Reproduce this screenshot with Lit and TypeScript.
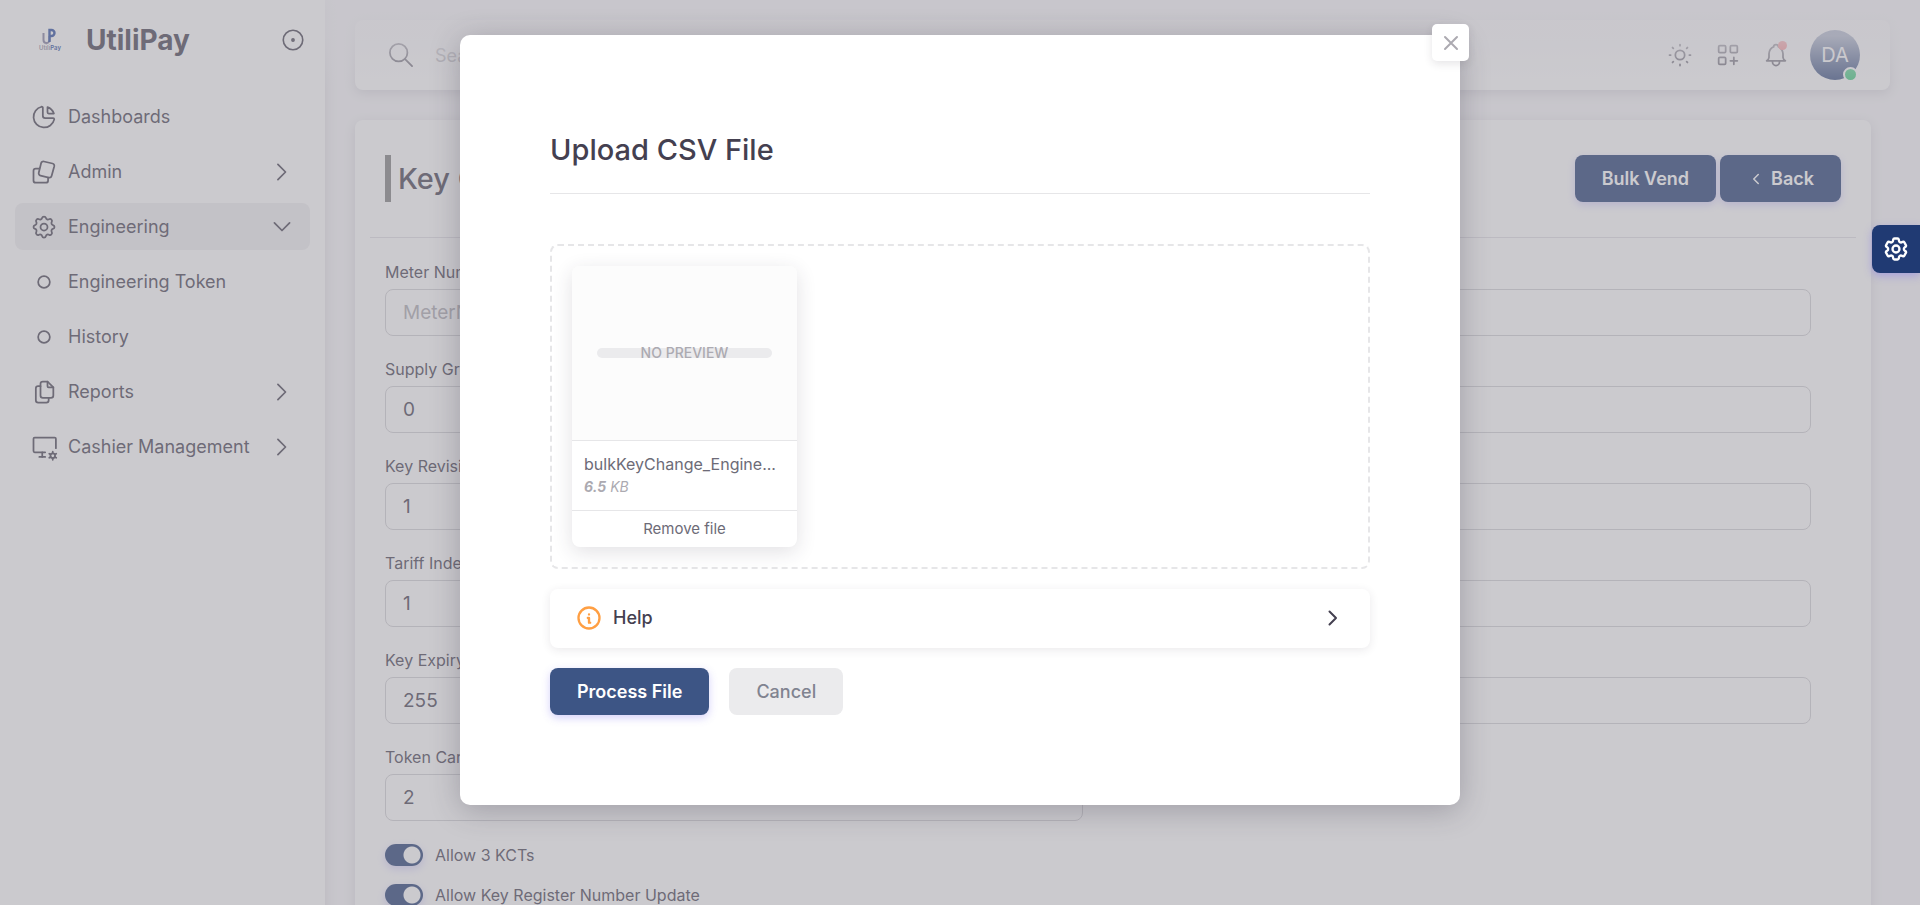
import { LitElement, html, css, svg, nothing } from "lit";
import { customElement, property } from "lit/decorators.js";

const ICONS: Record<string, unknown> = {
  pie: svg`<path d="M10 3.2a9 9 0 1 0 10.8 10.8a1 1 0 0 0 -1 -1h-6.8a2 2 0 0 1 -2 -2v-7a.9 .9 0 0 0 -1 -.8"/><path d="M15 3.5a9 9 0 0 1 5.5 5.5h-4.5a1 1 0 0 1 -1 -1v-4.5"/>`,
  cards: svg`<path d="M11.9 3l7.4 1.700a2 2 0 0 1 1.5 2.4l-2.3 8.3a2 2 0 0 1 -2.4 1.4l-7.1 -1.700a2 2 0 0 1 -1.5 -2.4l2 -8.2a2 2 0 0 1 2.4 -1.5z"/><path d="M8 9h-3a2 2 0 0 0 -2 2v8.2a2 2 0 0 0 2 2h8.5a2 2 0 0 0 2 -2v-2.3"/>`,
  settings: svg`<path d="M10.325 4.317c.426 -1.756 2.924 -1.756 3.35 0a1.724 1.724 0 0 0 2.573 1.066c1.543 -.94 3.31 .826 2.37 2.37a1.724 1.724 0 0 0 1.065 2.572c1.756 .426 1.756 2.924 0 3.35a1.724 1.724 0 0 0 -1.066 2.573c.94 1.543 -.826 3.31 -2.37 2.37a1.724 1.724 0 0 0 -2.572 1.065c-.426 1.756 -2.924 1.756 -3.35 0a1.724 1.724 0 0 0 -2.573 -1.066c-1.543 .94 -3.31 -.826 -2.37 -2.37a1.724 1.724 0 0 0 -1.065 -2.572c-1.756 -.426 -1.756 -2.924 0 -3.35a1.724 1.724 0 0 0 1.066 -2.573c-.94 -1.543 .826 -3.31 2.37 -2.37c1 .608 2.296 .07 2.572 -1.065z"/><circle cx="12" cy="12" r="3"/>`,
  cog: svg`<path d="M9.594 3.94c.09-.542.56-.94 1.11-.94h2.593c.55 0 1.02.398 1.11.94l.213 1.281c.063.374.313.686.645.87.074.04.147.083.22.127.325.196.72.257 1.075.124l1.217-.456a1.125 1.125 0 0 1 1.37.49l1.296 2.247a1.125 1.125 0 0 1-.26 1.431l-1.003.827c-.293.241-.438.613-.43.992a7.723 7.723 0 0 1 0 .255c-.008.378.137.75.43.991l1.004.827c.424.35.534.955.26 1.43l-1.298 2.247a1.125 1.125 0 0 1-1.369.491l-1.217-.456c-.355-.133-.75-.072-1.076.124a6.47 6.47 0 0 1-.22.128c-.331.183-.581.495-.644.869l-.213 1.281c-.09.543-.56.94-1.11.94h-2.594c-.55 0-1.019-.398-1.11-.94l-.213-1.281c-.062-.374-.312-.686-.644-.87a6.52 6.52 0 0 1-.22-.127c-.325-.196-.72-.257-1.076-.124l-1.217.456a1.125 1.125 0 0 1-1.369-.49l-1.297-2.247a1.125 1.125 0 0 1 .26-1.431l1.004-.827c.292-.24.437-.613.43-.991a6.932 6.932 0 0 1 0-.255c.007-.38-.138-.751-.43-.992l-1.004-.827a1.125 1.125 0 0 1-.26-1.43l1.297-2.247a1.125 1.125 0 0 1 1.37-.491l1.216.456c.356.133.751.072 1.076-.124.072-.044.146-.086.22-.128.332-.183.582-.495.644-.869l.214-1.28Z"/><circle cx="12" cy="12" r="3"/>`,
  dot: svg`<circle cx="12" cy="12" r="5"/>`,
  files: svg`<path d="M15 3v4a1 1 0 0 0 1 1h4"/><path d="M18 17h-7a2 2 0 0 1 -2 -2v-10a2 2 0 0 1 2 -2h4l5 5v7a2 2 0 0 1 -2 2z"/><path d="M16 17v2a2 2 0 0 1 -2 2h-7a2 2 0 0 1 -2 -2v-10a2 2 0 0 1 2 -2h2"/>`,
  desktop: svg`<path d="M13 16.5h-9a1 1 0 0 1 -1 -1v-10.5a1 1 0 0 1 1 -1h17.200a1 1 0 0 1 1 1v8"/><path d="M8 20.5h5"/><path d="M10.5 16.5v4"/><circle cx="19.5" cy="19.5" r="2"/><path d="M19.5 16v1.5M19.5 21.5v1.5M22.5 17.75l-1.3 .75M17.8 20.5l-1.3 .75M16.5 17.75l1.3 .75M21.2 20.5l1.3 .75"/>`,
  right: svg`<path d="M8.5 5.5l6.500 6.500l-6.500 6.500"/>`,
  down: svg`<path d="M5.5 8.5l6.500 6.500l6.500 -6.500"/>`,
  left: svg`<path d="M15 6l-6 6l6 6"/>`,
  target: svg`<circle cx="12" cy="12" r="9"/><circle cx="12" cy="12" r="1"/>`,
  search: svg`<circle cx="10" cy="10" r="7.5"/><path d="M21.5 21.5l-6 -6"/>`,
  sun: svg`<circle cx="12" cy="12" r="4"/><path d="M3 12h1m8 -9v1m8 8h1m-9 8v1m-6.4 -15.4l.7 .7m12.1 -.7l-.7 .7m0 11.4l.7 .7m-12.1 -.7l-.7 .7"/>`,
  grid: svg`<rect x="4" y="4" width="6" height="6" rx="1"/><rect x="14" y="4" width="6" height="6" rx="1"/><rect x="4" y="14" width="6" height="6" rx="1"/><path d="M14 17h6m-3 -3v6"/>`,
  bell: svg`<path d="M10 5a2 2 0 1 1 4 0a7 7 0 0 1 4 6v3a4 4 0 0 0 2 3h-16a4 4 0 0 0 2 -3v-3a7 7 0 0 1 4 -6"/><path d="M9 17v1a3 3 0 0 0 6 0v-1"/>`,
  info: svg`<circle cx="12" cy="12" r="9"/><path d="M12 9h.01"/><path d="M11 12h1v4h1"/>`,
  close: svg`<path d="M18 6l-12 12M6 6l12 12"/>`,
};

@customElement("ui-icon")
class UiIcon extends LitElement {
  @property() name = "";
  @property({ type: Number }) size = 28;
  @property({ type: Number }) stroke = 1.5;

  static styles = css`
    :host { display: inline-flex; flex: none; }
    svg { display: block; fill: none; stroke: currentColor; stroke-linecap: round; stroke-linejoin: round; }
  `;

  render() {
    return html`<svg width=${this.size} height=${this.size} viewBox="0 0 24 24" stroke-width=${this.stroke} aria-hidden="true">${ICONS[this.name]}</svg>`;
  }
}

interface MenuItem { label: string; icon: string; arrow?: string; active?: boolean }

const MENU: MenuItem[] = [
  { label: "Dashboards", icon: "pie" },
  { label: "Admin", icon: "cards", arrow: "right" },
  { label: "Engineering", icon: "settings", arrow: "down", active: true },
  { label: "Engineering Token", icon: "dot" },
  { label: "History", icon: "dot" },
  { label: "Reports", icon: "files", arrow: "right" },
  { label: "Cashier Management", icon: "desktop", arrow: "right" },
];

@customElement("side-menu")
class SideMenu extends LitElement {
  static styles = css`
    :host { display: block; background: #fff; box-shadow: 0 3px 12px rgba(47, 43, 61, 0.14); box-sizing: border-box; padding: 0 15px; color: #444050; }
    .brand { display: flex; align-items: center; height: 80px; padding: 0 4px 0 19px; margin-bottom: 13px; }
    .logo { display: block; margin-right: 22px; }
    .name { flex: 1; font-size: 28px; font-weight: 700; line-height: 36px; }
    .pin { display: flex; border: 0; background: none; padding: 0; color: #444050; }
    .list { list-style: none; margin: 0; padding: 0; display: grid; gap: 8px; }
    .item { display: flex; align-items: center; gap: 10px; height: 47px; padding: 0 14px 0 15px; border-radius: 8px; color: #444050; text-decoration: none; font-size: 18px; }
    .active { background: rgba(47, 43, 61, 0.08); }
    .label { flex: 1; white-space: nowrap; }
  `;

  render() {
    return html`
      <div class="brand">
        <svg class="logo" width="30" height="30" viewBox="0 0 30 30" aria-hidden="true">
          <path d="M9.5 8v7a3 3 0 0 0 6 0v-4" fill="none" stroke="#8380a0" stroke-width="2" />
          <path d="M15.5 17v-12h2a3 3 0 0 1 0 6h-2" fill="none" stroke="#2b4da0" stroke-width="2.4" />
          <text x="5" y="25" font-size="6" font-weight="600" fill="#8f8ca0">Utili<tspan fill="#2b4da0">Pay</tspan></text>
        </svg>
        <span class="name">UtiliPay</span>
        <button class="pin" aria-label="Collapse menu"><ui-icon name="target" size="26"></ui-icon></button>
      </div>
      <nav>
        <ul class="list">
          ${MENU.map((m) => html`<li>
            <a href="#" class="item ${m.active ? "active" : ""}">
              <ui-icon name=${m.icon}></ui-icon>
              <span class="label">${m.label}</span>
              ${m.arrow ? html`<ui-icon name=${m.arrow}></ui-icon>` : nothing}
            </a>
          </li>`)}
        </ul>
      </nav>
    `;
  }
}

@customElement("top-bar")
class TopBar extends LitElement {
  static styles = css`
    :host { display: flex; align-items: center; height: 70px; box-sizing: border-box; padding: 0 30px; background: #fff; border-radius: 8px; box-shadow: 0 3px 12px rgba(47, 43, 61, 0.14); color: #444050; }
    .search { display: flex; align-items: center; gap: 20px; flex: 1; padding-left: 2px; }
    .field { border: 0; outline: 0; background: none; flex: 1; font: inherit; font-size: 18px; padding: 0; }
    .field::placeholder { color: #acaab1; opacity: 1; }
    .tools { display: flex; align-items: center; gap: 20px; }
    .tool { position: relative; display: flex; border: 0; background: none; padding: 0; color: inherit; }
    .alert { position: absolute; top: 0; right: 3px; width: 9px; height: 9px; border-radius: 50%; background: #ff4c51; }
    .avatar { position: relative; width: 50px; height: 50px; border: 0; padding: 0; border-radius: 50%; background: #203a73; color: #fff; font: inherit; font-size: 20px; }
    .status { position: absolute; right: 2px; bottom: -2px; width: 11px; height: 11px; border: 2px solid #fff; border-radius: 50%; background: #28c76f; }
  `;

  render() {
    return html`
      <label class="search">
        <ui-icon name="search"></ui-icon>
        <input class="field" type="search" placeholder="Search (Ctrl+/)" aria-label="Search" />
      </label>
      <div class="tools">
        <button class="tool" aria-label="Theme"><ui-icon name="sun"></ui-icon></button>
        <button class="tool" aria-label="Shortcuts"><ui-icon name="grid"></ui-icon></button>
        <button class="tool" aria-label="Notifications"><ui-icon name="bell"></ui-icon><span class="alert"></span></button>
        <button class="avatar">DA<span class="status"></span></button>
      </div>
    `;
  }
}

interface Field { id: string; label: string; value?: string; placeholder?: string }

const FIELDS: Field[] = [
  { id: "meter", label: "Meter Number", placeholder: "MeterNumber" },
  { id: "meter-type", label: "Meter Type" },
  { id: "sgc", label: "Supply Group Code", value: "0" },
  { id: "new-sgc", label: "New Supply Group" },
  { id: "krn", label: "Key Revision Number", value: "1" },
  { id: "new-krn", label: "New Key Revision" },
  { id: "ti", label: "Tariff Index", value: "1" },
  { id: "new-ti", label: "New Tariff Index" },
  { id: "ken", label: "Key Expiry Number", value: "255" },
  { id: "new-ken", label: "New Key Expiry" },
  { id: "tct", label: "Token Carrier Type", value: "2" },
];

const SWITCHES = ["Allow 3 KCTs", "Allow Key Register Number Update"];

@customElement("key-change-form")
class KeyChangeForm extends LitElement {
  static styles = css`
    :host { display: block; box-sizing: border-box; background: #fff; border-radius: 8px; box-shadow: 0 3px 12px rgba(47, 43, 61, 0.14); padding: 35px 15px 30px; color: #444050; }
    .head { display: flex; align-items: center; gap: 4px; padding: 0 15px 35px; border-bottom: 1px solid #e0dfe4; }
    .title { flex: 1; margin: 0; padding-left: 7px; border-left: 6px solid #808080; font-size: 29px; line-height: 47px; font-weight: 500; }
    .btn { display: flex; align-items: center; gap: 6px; height: 47px; padding: 0 27px; border: 0; border-radius: 8px; background: #203a73; color: #fff; font: inherit; font-size: 18px; font-weight: 600; box-shadow: 0 3px 8px rgba(115, 103, 240, 0.3); }
    .grid { display: grid; grid-template-columns: 1fr 1fr; gap: 21px 30px; padding: 22px 45px 0 15px; }
    .row { display: grid; gap: 5px; }
    .label { font-size: 16px; line-height: 24px; }
    .input { width: 100%; height: 47px; box-sizing: border-box; border: 1px solid #d1d0d4; border-radius: 8px; background: none; padding: 0 17px; font: inherit; font-size: 19px; color: #444050; }
    .input::placeholder { color: #acaab1; opacity: 1; }
    .switches { display: grid; gap: 16px; padding: 22px 15px 0; }
    .switch { display: flex; align-items: center; gap: 12px; font-size: 16px; line-height: 24px; }
    .toggle { appearance: none; margin: 0; width: 38px; height: 22px; border-radius: 11px; box-shadow: 0 3px 8px rgba(115, 103, 240, 0.3); background: radial-gradient(circle at 27px 11px, #fff 8px, #203a73 9px); }
  `;

  render() {
    return html`
      <div class="head">
        <h4 class="title">Key Change</h4>
        <button class="btn">Bulk Vend</button>
        <button class="btn"><ui-icon name="left" size="18" stroke="2"></ui-icon>Back</button>
      </div>
      <div class="grid">
        ${FIELDS.map((f) => html`<div class="row">
          <label class="label" for=${f.id}>${f.label}</label>
          <input class="input" id=${f.id} .value=${f.value ?? ""} placeholder=${f.placeholder ?? ""} />
        </div>`)}
      </div>
      <div class="switches">
        ${SWITCHES.map((s) => html`<label class="switch"><input class="toggle" type="checkbox" role="switch" checked />${s}</label>`)}
      </div>
    `;
  }
}

@customElement("upload-dialog")
class UploadDialog extends LitElement {
  static styles = css`
    :host { display: block; position: relative; width: 100%; max-width: 1000px; box-sizing: border-box; padding: 90px; background: #fff; border-radius: 10px; box-shadow: 0 5px 30px rgba(47, 43, 61, 0.28); color: #444050; }
    .close { position: absolute; top: -11px; right: -9px; display: grid; place-items: center; width: 37px; height: 37px; padding: 0; border: 0; border-radius: 5px; background: #fff; color: #acaab1; box-shadow: 0 3px 8px rgba(47, 43, 61, 0.12); }
    .title { margin: 0; padding: 3px 0 22px; border-bottom: 1px solid #e6e6e8; font-size: 29px; line-height: 43px; font-weight: 500; }
    .body { padding-top: 50px; }
    .drop { border: 2px dashed #e6e6e8; border-radius: 8px; padding: 20px; }
    .file { width: 225px; border-radius: 8px; background: #fff; box-shadow: 0 5px 20px rgba(47, 43, 61, 0.14); overflow: hidden; color: #6d6b77; }
    .thumb { display: grid; place-items: center; height: 175px; box-sizing: border-box; background: #fcfcfc; border-bottom: 1px solid #e6e6e8; }
    .stack { display: grid; place-items: center; width: 175px; }
    .bar { grid-area: 1 / 1; width: 100%; height: 10px; border-radius: 5px; background: #ebebed; }
    .none { grid-area: 1 / 1; font-size: 14px; line-height: 20px; font-weight: 500; color: #acaab1; }
    .info { padding: 12px 12px 11px; }
    .fname { font-size: 16px; line-height: 22px; white-space: nowrap; }
    .size { font-size: 14px; line-height: 24px; font-style: italic; color: #acaab1; }
    .remove { display: block; width: 100%; height: 37px; border: 0; border-top: 1px solid #e6e6e8; background: none; padding: 0 0 2px; font: inherit; font-size: 15px; color: #6d6b77; }
    .help { display: flex; align-items: center; gap: 10px; width: 100%; height: 59px; margin: 20px 0; padding: 0 25px 2px; border: 0; border-radius: 8px; background: #fff; box-shadow: 0 2px 10px rgba(47, 43, 61, 0.1); font: inherit; font-size: 18px; font-weight: 500; color: #444050; }
    .help-text { flex: 1; text-align: left; }
    .warn { color: #ff9f43; }
    .actions { display: flex; gap: 20px; }
    .btn { height: 47px; padding: 0 27px; border: 0; border-radius: 8px; font: inherit; font-size: 18px; font-weight: 600; }
    .primary { background: #3d5585; color: #fff; box-shadow: 0 3px 8px rgba(115, 103, 240, 0.3); }
    .secondary { background: #ebebed; color: #808390; font-weight: 500; }
  `;

  render() {
    return html`
      <button class="close" aria-label="Close"><ui-icon name="close" size="24" stroke="2"></ui-icon></button>
      <h4 class="title">Upload CSV File</h4>
      <div class="body">
        <div class="drop">
          <div class="file">
            <div class="thumb"><div class="stack"><span class="bar"></span><span class="none">NO PREVIEW</span></div></div>
            <div class="info">
              <div class="fname">bulkKeyChange_Engine...</div>
              <div class="size"><strong>6.5</strong> KB</div>
            </div>
            <button class="remove">Remove file</button>
          </div>
        </div>
        <button class="help" aria-expanded="false">
          <ui-icon class="warn" name="info" stroke="2"></ui-icon>
          <span class="help-text">Help</span>
          <ui-icon name="right" size="24" stroke="2"></ui-icon>
        </button>
        <div class="actions">
          <button class="btn primary">Process File</button>
          <button class="btn secondary">Cancel</button>
        </div>
      </div>
    `;
  }
}

@customElement("app-root")
class AppRoot extends LitElement {
  static styles = css`
    :host { display: block; height: 100vh; overflow: hidden; position: relative; background: #f8f7fa; font-family: Inter, "Noto Sans", sans-serif; font-size: 18px; }
    .shell { display: flex; align-items: stretch; min-height: 100%; }
    .side { flex: none; width: 325px; min-height: 100vh; }
    .main { position: relative; flex: 1; min-width: 0; display: flex; flex-direction: column; gap: 30px; padding: 20px 30px 30px; }
    .card { margin-right: 19px; }
    .fade { position: absolute; inset: 0 0 auto 0; height: 90px; background: linear-gradient(180deg, rgba(248, 247, 250, 0.7) 40%, rgba(248, 247, 250, 0.4) 65%, rgba(248, 247, 250, 0) 100%); pointer-events: none; }
    .backdrop { position: absolute; inset: 0; background: rgba(151, 149, 158, 0.5); }
    .layer { position: absolute; inset: 0; display: flex; justify-content: center; align-items: flex-start; padding-top: 35px; }
    .customize { position: absolute; right: 0; top: 225px; display: grid; place-items: center; width: 48px; height: 48px; padding: 0; border: 0; border-radius: 8px 0 0 8px; background: #203a73; color: #fff; box-shadow: 0 3px 8px rgba(115, 103, 240, 0.4); }
  `;

  render() {
    return html`
      <div class="shell">
        <side-menu class="side"></side-menu>
        <main class="main">
          <top-bar></top-bar>
          <key-change-form class="card"></key-change-form>
          <div class="fade"></div>
        </main>
      </div>
      <div class="backdrop"></div>
      <div class="layer"><upload-dialog role="dialog" aria-modal="true" aria-label="Upload CSV File"></upload-dialog></div>
      <button class="customize" aria-label="Customize"><ui-icon name="cog" size="28" stroke="2"></ui-icon></button>
    `;
  }
}
